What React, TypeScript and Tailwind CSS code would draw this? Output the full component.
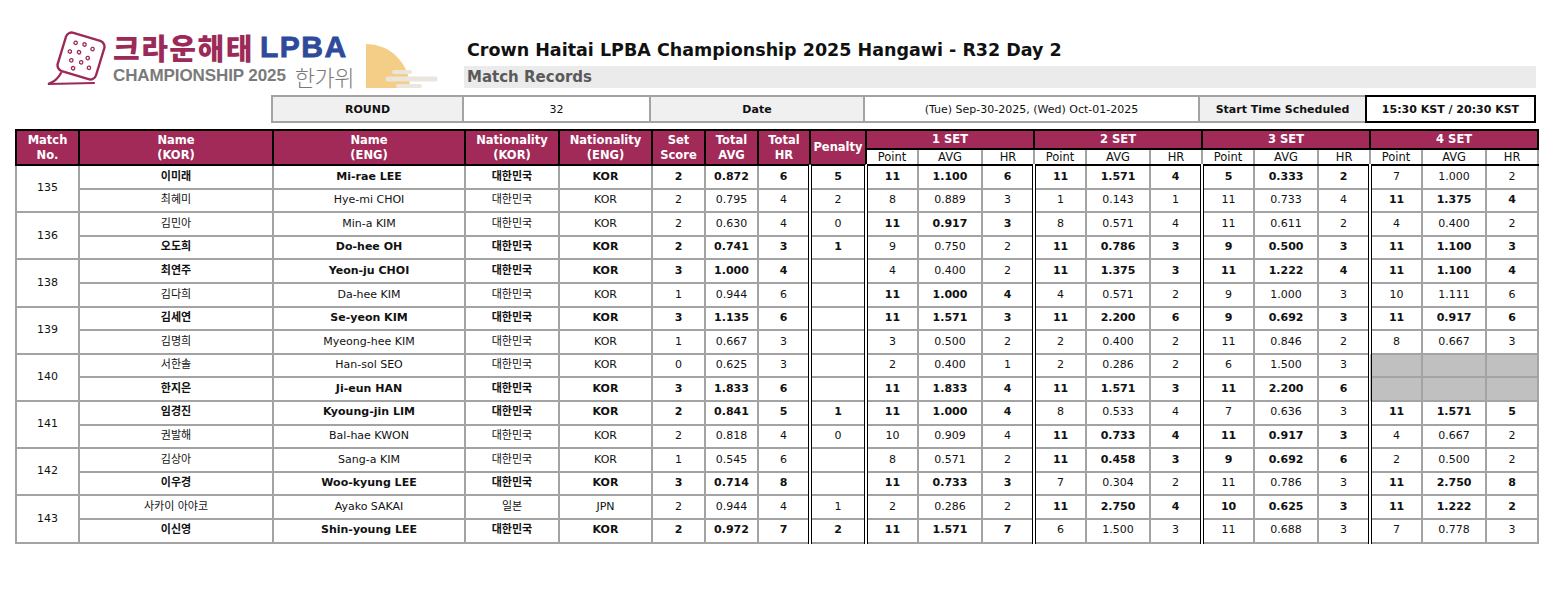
import React from "react";

type SetVal = [number, string, number, boolean];
type Row = {
  k: string;
  e: string;
  nk: string;
  ne: string;
  ss: number;
  avg: string;
  hr: number;
  pen: string;
  b: boolean;
  sets: (SetVal | null)[];
};

const rows: Row[] = [
  { k: "이미래", e: "Mi-rae LEE", nk: "대한민국", ne: "KOR", ss: 2, avg: "0.872", hr: 6, pen: "5", b: true,
    sets: [[11, "1.100", 6, true], [11, "1.571", 4, true], [5, "0.333", 2, true], [7, "1.000", 2, false]] },
  { k: "최혜미", e: "Hye-mi CHOI", nk: "대한민국", ne: "KOR", ss: 2, avg: "0.795", hr: 4, pen: "2", b: false,
    sets: [[8, "0.889", 3, false], [1, "0.143", 1, false], [11, "0.733", 4, false], [11, "1.375", 4, true]] },
  { k: "김민아", e: "Min-a KIM", nk: "대한민국", ne: "KOR", ss: 2, avg: "0.630", hr: 4, pen: "0", b: false,
    sets: [[11, "0.917", 3, true], [8, "0.571", 4, false], [11, "0.611", 2, false], [4, "0.400", 2, false]] },
  { k: "오도희", e: "Do-hee OH", nk: "대한민국", ne: "KOR", ss: 2, avg: "0.741", hr: 3, pen: "1", b: true,
    sets: [[9, "0.750", 2, false], [11, "0.786", 3, true], [9, "0.500", 3, true], [11, "1.100", 3, true]] },
  { k: "최연주", e: "Yeon-ju CHOI", nk: "대한민국", ne: "KOR", ss: 3, avg: "1.000", hr: 4, pen: "", b: true,
    sets: [[4, "0.400", 2, false], [11, "1.375", 3, true], [11, "1.222", 4, true], [11, "1.100", 4, true]] },
  { k: "김다희", e: "Da-hee KIM", nk: "대한민국", ne: "KOR", ss: 1, avg: "0.944", hr: 6, pen: "", b: false,
    sets: [[11, "1.000", 4, true], [4, "0.571", 2, false], [9, "1.000", 3, false], [10, "1.111", 6, false]] },
  { k: "김세연", e: "Se-yeon KIM", nk: "대한민국", ne: "KOR", ss: 3, avg: "1.135", hr: 6, pen: "", b: true,
    sets: [[11, "1.571", 3, true], [11, "2.200", 6, true], [9, "0.692", 3, true], [11, "0.917", 6, true]] },
  { k: "김명희", e: "Myeong-hee KIM", nk: "대한민국", ne: "KOR", ss: 1, avg: "0.667", hr: 3, pen: "", b: false,
    sets: [[3, "0.500", 2, false], [2, "0.400", 2, false], [11, "0.846", 2, false], [8, "0.667", 3, false]] },
  { k: "서한솔", e: "Han-sol SEO", nk: "대한민국", ne: "KOR", ss: 0, avg: "0.625", hr: 3, pen: "", b: false,
    sets: [[2, "0.400", 1, false], [2, "0.286", 2, false], [6, "1.500", 3, false], null] },
  { k: "한지은", e: "Ji-eun HAN", nk: "대한민국", ne: "KOR", ss: 3, avg: "1.833", hr: 6, pen: "", b: true,
    sets: [[11, "1.833", 4, true], [11, "1.571", 3, true], [11, "2.200", 6, true], null] },
  { k: "임경진", e: "Kyoung-jin LIM", nk: "대한민국", ne: "KOR", ss: 2, avg: "0.841", hr: 5, pen: "1", b: true,
    sets: [[11, "1.000", 4, true], [8, "0.533", 4, false], [7, "0.636", 3, false], [11, "1.571", 5, true]] },
  { k: "권발해", e: "Bal-hae KWON", nk: "대한민국", ne: "KOR", ss: 2, avg: "0.818", hr: 4, pen: "0", b: false,
    sets: [[10, "0.909", 4, false], [11, "0.733", 4, true], [11, "0.917", 3, true], [4, "0.667", 2, false]] },
  { k: "김상아", e: "Sang-a KIM", nk: "대한민국", ne: "KOR", ss: 1, avg: "0.545", hr: 6, pen: "", b: false,
    sets: [[8, "0.571", 2, false], [11, "0.458", 3, true], [9, "0.692", 6, true], [2, "0.500", 2, false]] },
  { k: "이우경", e: "Woo-kyung LEE", nk: "대한민국", ne: "KOR", ss: 3, avg: "0.714", hr: 8, pen: "", b: true,
    sets: [[11, "0.733", 3, true], [7, "0.304", 2, false], [11, "0.786", 3, false], [11, "2.750", 8, true]] },
  { k: "사카이 아야코", e: "Ayako SAKAI", nk: "일본", ne: "JPN", ss: 2, avg: "0.944", hr: 4, pen: "1", b: false,
    sets: [[2, "0.286", 2, false], [11, "2.750", 4, true], [10, "0.625", 3, true], [11, "1.222", 2, true]] },
  { k: "이신영", e: "Shin-young LEE", nk: "대한민국", ne: "KOR", ss: 2, avg: "0.972", hr: 7, pen: "2", b: true,
    sets: [[11, "1.571", 7, true], [6, "1.500", 3, false], [11, "0.688", 3, false], [7, "0.778", 3, false]] },
];

const matchNos = ["135", "136", "138", "139", "140", "141", "142", "143"];

const colWidths = [63, 194, 192, 94, 93, 53, 53, 52, 56, 52, 64, 52, 52, 64, 52, 52, 64, 52, 52, 64, 52];

const TD = "border-2 border-[#a3a3a3] p-0 text-center align-middle whitespace-nowrap";
const DBL = "[border-left:4px_double_#000]";
const TH = "border-2 border-black bg-[#a12a58] text-white font-bold p-0 text-center align-middle leading-[15px] text-[11.5px]";
const SUB = "border-2 border-[#a3a3a3] border-b-black bg-white font-normal text-[#111] text-[11.5px] p-0 text-center leading-[14px]";

function CrackerIcon() {
  return (
    <svg width="60" height="58" viewBox="0 0 60 58" className="shrink-0">
      <g transform="rotate(17 35 27)" fill="none" stroke="#9c2a59">
        <rect x="15" y="7" width="40" height="40" rx="6" strokeWidth="2.4" />
        <g strokeWidth="1.3">
          <circle cx="26" cy="16" r="1.7" />
          <circle cx="35" cy="15" r="1.7" />
          <circle cx="44" cy="17" r="1.7" />
          <circle cx="23" cy="26" r="1.7" />
          <circle cx="32" cy="24" r="1.7" />
          <circle cx="42" cy="27" r="1.7" />
          <circle cx="27" cy="34" r="1.7" />
          <circle cx="37" cy="33" r="1.7" />
          <circle cx="46" cy="36" r="1.7" />
          <circle cx="31" cy="41" r="1.7" />
        </g>
      </g>
      <path d="M15 44 Q11 52 2 55 L48 54" fill="none" stroke="#9c2a59" strokeWidth="2.2" strokeLinecap="round" />
    </svg>
  );
}

function MoonIcon() {
  return (
    <svg width="74" height="48" viewBox="0 0 74 48" className="shrink-0">
      <path d="M2 46 L2 2 A44 44 0 0 1 46 46 Z" fill="#f4cd86" />
      <g stroke="#ebe6dd" strokeLinecap="round">
        <line x1="30" y1="30" x2="46" y2="30" strokeWidth="4" />
        <line x1="24" y1="37" x2="71" y2="37" strokeWidth="5" />
        <line x1="34" y1="44" x2="56" y2="44" strokeWidth="4" />
      </g>
    </svg>
  );
}

export default function App() {
  return (
    <div className="w-[1555px] h-[593px] bg-white overflow-hidden text-[#111] font-['DejaVu_Sans','Noto_Sans_CJK_KR',sans-serif]">
      <div className="pl-[15px]">
        {/* top area */}
        <div className="flex h-[94px]">
          <div className="w-[449px] flex items-start pt-[29px] pl-[31px]">
            <CrackerIcon />
            <div className="flex flex-col ml-[7px] mt-[2px]">
              <div className="flex items-center h-[32px]">
                <span className="font-['Noto_Sans_CJK_KR',sans-serif] font-black text-[29px] leading-[32px] tracking-[1.5px] text-[#9c2a59]">
                  크라운해태
                </span>
                <span className="ml-[6px] font-['Liberation_Sans',sans-serif] font-bold text-[30px] leading-[32px] tracking-[1.5px] text-[#2e4b9b] [-webkit-text-stroke:0.8px_#2e4b9b]">
                  LPBA
                </span>
              </div>
              <div className="flex items-center h-[24px] mt-[1px]">
                <span className="font-['Liberation_Sans',sans-serif] font-bold text-[17px] leading-[24px] tracking-[-0.1px] text-[#7a7a7a]">
                  CHAMPIONSHIP 2025
                </span>
                <span className="ml-[9px] font-['Noto_Sans_CJK_KR',sans-serif] font-light text-[22px] leading-[24px] tracking-[-0.5px] text-[#7a7a7a]">
                  한가위
                </span>
              </div>
            </div>
            <div className="ml-[10px] mt-[13px]">
              <MoonIcon />
            </div>
          </div>
          <div className="w-[1072px] flex flex-col pt-[37px]">
            <div className="h-[26px] pl-[3px] text-[17.5px] font-bold leading-[26px] text-[#111]">
              Crown Haitai LPBA Championship 2025 Hangawi - R32 Day 2
            </div>
            <div className="mt-[3px] h-[22px] bg-[#ebebeb] pl-[3px] text-[15px] font-bold leading-[22px] text-[#5a5a5a]">
              Match Records
            </div>
          </div>
        </div>

        {/* info row */}
        <div className="ml-[256px] mt-[1px] flex h-[28px] text-[11px] leading-none">
          <div className="w-[193px] border-2 border-[#a3a3a3] bg-[#f0f0f0] font-bold flex items-center justify-center">ROUND</div>
          <div className="w-[187px] border-y-2 border-r-2 border-[#a3a3a3] flex items-center justify-center">32</div>
          <div className="w-[214px] border-y-2 border-r-2 border-[#a3a3a3] bg-[#f0f0f0] font-bold flex items-center justify-center">Date</div>
          <div className="w-[335px] border-y-2 border-r-2 border-[#a3a3a3] flex items-center justify-center">(Tue) Sep-30-2025, (Wed) Oct-01-2025</div>
          <div className="w-[167px] border-y-2 border-r-2 border-[#a3a3a3] bg-[#f0f0f0] font-bold flex items-center justify-center">Start Time Scheduled</div>
          <div className="w-[171px] -ml-[2px] border-2 border-black font-bold flex items-center justify-center">15:30 KST / 20:30 KST</div>
        </div>

        {/* table */}
        <table className="mt-[6px] w-[1522px] table-fixed border-collapse text-[11px]">
          <colgroup>
            {colWidths.map((w, i) => (
              <col key={i} style={{ width: w }} />
            ))}
          </colgroup>
          <thead>
            <tr className="h-[19px]">
              <th rowSpan={2} className={TH}>Match<br />No.</th>
              <th rowSpan={2} className={TH}>Name<br />(KOR)</th>
              <th rowSpan={2} className={TH}>Name<br />(ENG)</th>
              <th rowSpan={2} className={TH}>Nationality<br />(KOR)</th>
              <th rowSpan={2} className={TH}>Nationality<br />(ENG)</th>
              <th rowSpan={2} className={TH}>Set<br />Score</th>
              <th rowSpan={2} className={TH}>Total<br />AVG</th>
              <th rowSpan={2} className={TH}>Total<br />HR</th>
              <th rowSpan={2} className={TH}>Penalty</th>
              <th colSpan={3} className={TH}>1 SET</th>
              <th colSpan={3} className={TH}>2 SET</th>
              <th colSpan={3} className={TH}>3 SET</th>
              <th colSpan={3} className={TH}>4 SET</th>
            </tr>
            <tr className="h-[16px]">
              {[0, 1, 2, 3].map((s) => (
                <React.Fragment key={s}>
                  <th className={`${SUB} border-l-black`}>Point</th>
                  <th className={SUB}>AVG</th>
                  <th className={SUB}>HR</th>
                </React.Fragment>
              ))}
            </tr>
          </thead>
          <tbody>
            {rows.map((r, i) => {
              const w = r.b ? "font-bold" : "font-normal";
              return (
                <tr key={i} className="h-[23.6px]">
                  {i % 2 === 0 && (
                    <td rowSpan={2} className={`${TD} font-normal`}>
                      {matchNos[i / 2]}
                    </td>
                  )}
                  <td className={`${TD} ${w}`}>{r.k}</td>
                  <td className={`${TD} ${w}`}>{r.e}</td>
                  <td className={`${TD} ${w}`}>{r.nk}</td>
                  <td className={`${TD} ${w}`}>{r.ne}</td>
                  <td className={`${TD} ${w}`}>{r.ss}</td>
                  <td className={`${TD} ${w}`}>{r.avg}</td>
                  <td className={`${TD} ${w}`}>{r.hr}</td>
                  <td className={`${TD} ${w} ${DBL}`}>{r.pen}</td>
                  {r.sets.map((s, j) =>
                    s ? (
                      <React.Fragment key={j}>
                        <td className={`${TD} ${DBL} ${s[3] ? "font-bold" : "font-normal"}`}>{s[0]}</td>
                        <td className={`${TD} ${s[3] ? "font-bold" : "font-normal"}`}>{s[1]}</td>
                        <td className={`${TD} ${s[3] ? "font-bold" : "font-normal"}`}>{s[2]}</td>
                      </React.Fragment>
                    ) : (
                      <React.Fragment key={j}>
                        <td className={`${TD} ${DBL} bg-[#c0c0c0]`}></td>
                        <td className={`${TD} bg-[#c0c0c0]`}></td>
                        <td className={`${TD} bg-[#c0c0c0]`}></td>
                      </React.Fragment>
                    )
                  )}
                </tr>
              );
            })}
          </tbody>
        </table>
      </div>
    </div>
  );
}
